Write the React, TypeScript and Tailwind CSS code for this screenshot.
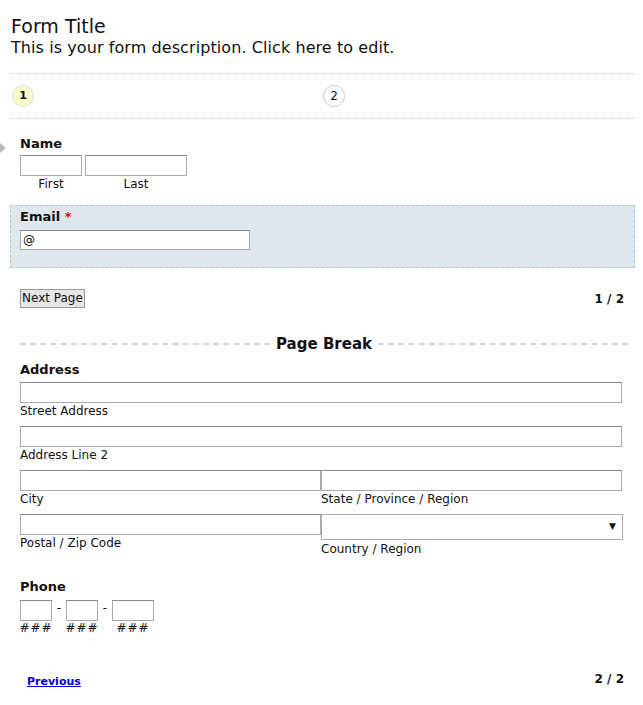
import { useState } from 'react';

function TextBox({ className = '' }: { className?: string }) {
  return (
    <input
      type="text"
      className={`h-[21px] border border-[#aaa] border-t-[#888] bg-white px-1 text-[12px] outline-none ${className}`}
    />
  );
}

export default function App() {
  const [email, setEmail] = useState('@');

  return (
    <div className="relative h-[705px] w-[643px] overflow-hidden bg-white font-['DejaVu_Sans',sans-serif] text-[#111]">
      {/* header */}
      <div className="px-[11px] pt-[14px]">
        <h1 className="text-[19px] leading-[24px]">Form Title</h1>
        <p className="text-[16px] leading-[20px] tracking-[0.08px]">This is your form description. Click here to edit.</p>
      </div>

      {/* steps */}
      <div className="ml-[10px] mr-[8px] mt-[15px] flex h-[46px] items-center border-y border-dotted border-[#c8c8c8]">
        <div className="flex w-[313px] items-center pl-[2px]">
          <span className="flex h-[22px] w-[22px] items-center justify-center rounded-full border border-[#ddd] bg-[#fafac6] text-[11px] font-bold">
            1
          </span>
        </div>
        <span className="flex h-[22px] w-[22px] items-center justify-center rounded-full border border-[#ccc] bg-white text-[12px]">
          2
        </span>
      </div>

      {/* name */}
      <div className="relative mt-[17px] pl-[20px]">
        <span className="absolute left-0 top-[7px] h-0 w-0 border-y-[5px] border-l-[6px] border-y-transparent border-l-[#bbb]" />
        <div className="text-[13px] font-bold leading-[16px]">Name</div>
        <div className="mt-[3px] flex gap-[3px]">
          <div className="flex w-[62px] flex-col items-center">
            <TextBox className="w-[62px]" />
            <span className="text-[12px] leading-[16px]">First</span>
          </div>
          <div className="flex w-[102px] flex-col items-center">
            <TextBox className="w-[102px]" />
            <span className="text-[12px] leading-[16px]">Last</span>
          </div>
        </div>
      </div>

      {/* email */}
      <div className="ml-[10px] mr-[8px] mt-[13px] h-[63px] border border-dashed border-[#a9cdd2] bg-[#dfe7ed] pl-[9px] pt-[3px]">
        <div className="text-[13px] font-bold leading-[16px]">
          Email <span className="text-[#e00]">*</span>
        </div>
        <input
          value={email}
          onChange={(e) => setEmail(e.target.value)}
          className="mt-[5px] h-[20px] w-[230px] border border-[#aaa] border-t-[#888] bg-white px-[2px] text-[12px] outline-none"
        />
      </div>

      {/* next page */}
      <div className="mt-[21px] flex items-center justify-between pl-[20px] pr-[19px]">
        <button className="h-[19px] border border-[#999] bg-[#e6e6e6] px-[1px] text-[12px] leading-[15px]">Next Page</button>
        <span className="text-[12px] font-bold">1 / 2</span>
      </div>

      {/* page break */}
      <div className="ml-[20px] mr-[15px] mt-[27px] flex items-center gap-[6px]">
        <div className="flex-1 border-t-2 border-dashed border-[#d4d4d4]" />
        <span className="text-[15px] font-bold leading-[18px]">Page Break</span>
        <div className="flex-1 border-t-2 border-dashed border-[#d4d4d4]" />
      </div>

      {/* address */}
      <div className="mt-[9px] pl-[20px] pr-[21px]">
        <div className="text-[13px] font-bold leading-[16px]">Address</div>
        <div className="mt-[4px] flex flex-col">
          <TextBox className="w-full" />
          <span className="text-[12px] leading-[16px]">Street Address</span>
        </div>
        <div className="mt-[7px] flex flex-col">
          <TextBox className="w-full" />
          <span className="text-[12px] leading-[16px]">Address Line 2</span>
        </div>
        <div className="mt-[7px] grid grid-cols-2">
          <div className="flex flex-col">
            <TextBox className="w-full" />
            <span className="text-[12px] leading-[16px]">City</span>
          </div>
          <div className="flex flex-col">
            <TextBox className="w-full" />
            <span className="text-[12px] leading-[16px]">State / Province / Region</span>
          </div>
        </div>
        <div className="mt-[7px] grid grid-cols-2">
          <div className="flex flex-col">
            <TextBox className="w-full" />
            <span className="text-[12px] leading-[16px]">Postal / Zip Code</span>
          </div>
          <div className="flex flex-col">
            <div className="flex h-[26px] w-[302px] items-center justify-end border border-[#aaa] bg-white pr-[6px] text-[9px]">
              ▼
            </div>
            <span className="mt-[1px] text-[12px] leading-[16px]">Country / Region</span>
          </div>
        </div>
      </div>

      {/* phone */}
      <div className="mt-[22px] pl-[20px]">
        <div className="text-[13px] font-bold leading-[16px]">Phone</div>
        <div className="mt-[5px] flex items-start">
          <div className="flex w-[32px] flex-col items-center">
            <TextBox className="w-[32px]" />
            <span className="text-[12px] leading-[14px] tracking-[1px]">###</span>
          </div>
          <span className="w-[14px] text-center text-[12px] leading-[16px]">-</span>
          <div className="flex w-[32px] flex-col items-center">
            <TextBox className="w-[32px]" />
            <span className="text-[12px] leading-[14px] tracking-[1px]">###</span>
          </div>
          <span className="w-[14px] text-center text-[12px] leading-[16px]">-</span>
          <div className="flex w-[42px] flex-col items-center">
            <TextBox className="w-[42px]" />
            <span className="text-[12px] leading-[14px] tracking-[1px]">###</span>
          </div>
        </div>
      </div>

      {/* footer */}
      <div className="mt-[36px] flex items-start justify-between pl-[27px] pr-[19px]">
        <a href="#" className="pt-[4px] text-[11px] font-bold leading-[14px] text-[#0000cc] underline">
          Previous
        </a>
        <span className="text-[12px] font-bold leading-[16px]">2 / 2</span>
      </div>
    </div>
  );
}
